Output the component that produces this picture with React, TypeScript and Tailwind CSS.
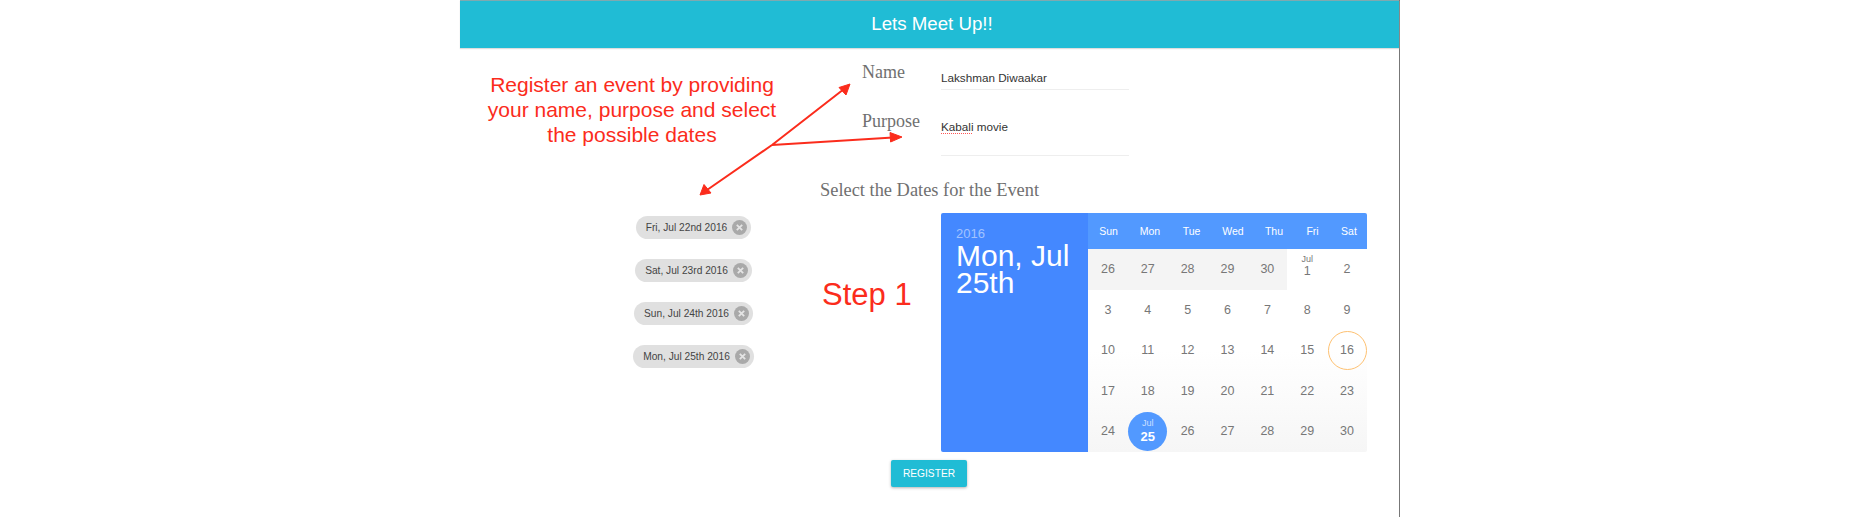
const SANS = "font-['Liberation_Sans',Arial,sans-serif]";
const SERIF = "font-['Liberation_Serif','Times_New_Roman',serif]";

const chips = [
  "Fri, Jul 22nd 2016",
  "Sat, Jul 23rd 2016",
  "Sun, Jul 24th 2016",
  "Mon, Jul 25th 2016",
];

const weekDays = ["Sun", "Mon", "Tue", "Wed", "Thu", "Fri", "Sat"];

const weeks = [
  [26, 27, 28, 29, 30, 1, 2],
  [3, 4, 5, 6, 7, 8, 9],
  [10, 11, 12, 13, 14, 15, 16],
  [17, 18, 19, 20, 21, 22, 23],
  [24, 25, 26, 27, 28, 29, 30],
];

function Chip({ label }: { label: string }) {
  return (
    <div className="flex h-[23px] items-center gap-[5px] rounded-full bg-[#e0e0e0] pl-[10px] pr-[4px]">
      <span className="whitespace-nowrap text-[10.2px] text-[#444]">{label}</span>
      <svg width="15" height="15" viewBox="0 0 15 15" className="shrink-0">
        <circle cx="7.5" cy="7.5" r="7.5" fill="#a9a9a9" />
        <path d="M4.8 4.8l5.4 5.4M10.2 4.8l-5.4 5.4" stroke="#e4e4e4" strokeWidth="1.8" />
      </svg>
    </div>
  );
}

function Arrows() {
  const red = "#fb2c1c";
  return (
    <svg className="pointer-events-none absolute left-0 top-0" width="1860" height="517" fill="none">
      <path d="M772 145L844 89M772 145L893 137.5M772 145L707 190" stroke={red} strokeWidth="2" />
      <path d="M850 84L839 87.5L846 95Z" fill={red} stroke={red} />
      <path d="M902 137L890 132.5L890.6 142Z" fill={red} stroke={red} />
      <path d="M700 195L704 184.5L711 193Z" fill={red} stroke={red} />
    </svg>
  );
}

function DayCell({ day, weekIndex, dayIndex }: { day: number; weekIndex: number; dayIndex: number }) {
  const muted = weekIndex === 0 && dayIndex < 5;
  const first = weekIndex === 0 && dayIndex === 5;
  const selected = weekIndex === 4 && dayIndex === 1;
  const today = day === 16;

  return (
    <div className={`flex items-center justify-center ${muted ? "bg-[#f4f4f4]" : ""}`}>
      {selected ? (
        <div className="flex h-[39px] w-[39px] flex-col items-center justify-center rounded-full bg-[#5299ff] text-white">
          <span className="text-[9px] leading-[10px] text-white/70">Jul</span>
          <span className="text-[13px] font-bold leading-[17px]">25</span>
        </div>
      ) : today ? (
        <div className="flex h-[39px] w-[39px] items-center justify-center rounded-full border border-[#fdc071] text-[12.5px] text-[#777]">
          {day}
        </div>
      ) : first ? (
        <div className="flex flex-col items-center pb-[5px] text-[#777]">
          <span className="text-[9px] leading-[10px]">Jul</span>
          <span className="text-[12.5px] leading-[15px]">{day}</span>
        </div>
      ) : (
        <span className="text-[12.5px] text-[#777]">{day}</span>
      )}
    </div>
  );
}

function Calendar() {
  return (
    <div className="flex h-[239px] w-[426px] overflow-hidden rounded-[2px]">
      <div className="w-[147px] shrink-0 bg-[#4488ff] pl-[15px] pt-[13px] text-white">
        <div className="text-[13px] leading-[16px] text-white/50">2016</div>
        <div className="text-[30px] leading-[27px]">Mon, Jul 25th</div>
      </div>
      <div className="flex flex-1 flex-col">
        <div className="grid h-[36px] grid-cols-[41px_42px_41px_42px_40px_37px_36px] items-center bg-[#5299ff] pt-[2px] text-center text-[10.5px] text-white">
          {weekDays.map((name) => (
            <span key={name}>{name}</span>
          ))}
        </div>
        <div className="grid flex-1 grid-cols-7 grid-rows-5 bg-linear-to-b from-white from-50% to-[#f6f6f6]">
          {weeks.map((week, weekIndex) =>
            week.map((day, dayIndex) => (
              <DayCell key={`${weekIndex}-${dayIndex}`} day={day} weekIndex={weekIndex} dayIndex={dayIndex} />
            )),
          )}
        </div>
      </div>
    </div>
  );
}

export default function App() {
  return (
    <div className={`relative min-h-[517px] bg-white ${SANS}`}>
      <div className="ml-[460px] h-[517px] w-[940px] border-r border-[#777]">
        <header className="flex h-[48px] items-center justify-center border-t border-[#7fa9b0] bg-[#20bcd5] pl-[5px] text-[18.7px] text-white shadow-[0_1px_1px_#ddd]">
          Lets Meet Up!!
        </header>

        <div className="flex">
          <p className="mt-[24px] w-[344px] text-center text-[21px] leading-[25px] text-[#fb2c1c]">
            Register an event by providing
            <br />
            your name, purpose and select
            <br />
            the possible dates
          </p>
          <div className="ml-[58px]">
            <div className="flex h-[42px]">
              <label className={`w-[79px] pt-[12px] text-[18px] leading-[24px] text-[#707070] ${SERIF}`}>Name</label>
              <div className="h-[42px] w-[188px] border-b border-[#eee] pt-[22px] text-[11.7px] leading-[16px] text-[#333]">
                Lakshman Diwaakar
              </div>
            </div>
            <div className="flex h-[66px]">
              <label className={`w-[79px] pt-[19px] text-[18px] leading-[24px] text-[#707070] ${SERIF}`}>Purpose</label>
              <div className="h-[66px] w-[188px] border-b border-[#eee] pt-[29px] text-[11.7px] leading-[16px] text-[#333]">
                <span className="underline decoration-[#f55] decoration-dotted decoration-1 underline-offset-2">Kabali</span> movie
              </div>
            </div>
          </div>
        </div>

        <h2 className={`ml-[360px] mt-[22px] text-[18.4px] leading-[24px] text-[#707070] ${SERIF}`}>
          Select the Dates for the Event
        </h2>

        <div className="mt-[11px] flex">
          <div className="ml-[173px] flex w-[121px] shrink-0 flex-col items-center gap-[20px] pt-[3px]">
            {chips.map((chip) => (
              <Chip key={chip} label={chip} />
            ))}
          </div>
          <div className="ml-[68px] w-[119px] shrink-0 whitespace-nowrap pt-[64px] text-[31px] leading-[36px] text-[#fb2c1c]">Step 1</div>
          <Calendar />
        </div>

        <button className="ml-[431px] mt-[8px] block h-[27px] w-[76px] rounded-[2px] bg-[#20bcd5] text-[10.2px] text-white shadow-[0_1px_3px_rgba(0,0,0,0.3)]">
          REGISTER
        </button>
      </div>

      <Arrows />
    </div>
  );
}
